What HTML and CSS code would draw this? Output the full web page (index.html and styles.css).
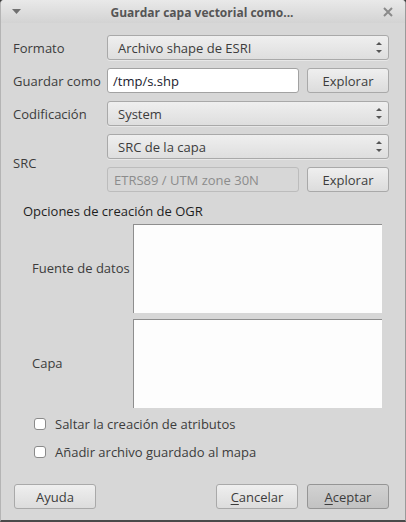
FILE: index.html
```html
<!DOCTYPE html>
<html lang="es">
<head>
<meta charset="utf-8">
<link rel="stylesheet" href="styles.css">
</head>
<body>
<div class="window">
  <div class="titlebar">
    <svg class="menu-arrow" width="9" height="5" viewBox="0 0 9 5"><path d="M0 0 H9 L4.5 5 Z" fill="#707070"/></svg>
    <span class="title">Guardar capa vectorial como...</span>
    <svg class="close" width="10" height="10" viewBox="0 0 10 10"><path d="M1 1 L9 9 M9 1 L1 9" stroke="#8a8a8a" stroke-width="2"/></svg>
  </div>
  <div class="content">
    <div class="form">
      <div class="label">Formato</div>
      <div class="combo"><span>Archivo shape de ESRI</span><span class="spin"><i class="up"></i><i class="down"></i></span></div>

      <div class="label">Guardar como</div>
      <div class="pair">
        <div class="input">/tmp/s.shp</div>
        <button class="btn">Explorar</button>
      </div>

      <div class="label">Codificación</div>
      <div class="combo"><span>System</span><span class="spin"><i class="up"></i><i class="down"></i></span></div>

      <div class="label src">SRC</div>
      <div class="combo"><span>SRC de la capa</span><span class="spin"><i class="up"></i><i class="down"></i></span></div>
      <div class="pair">
        <div class="input disabled">ETRS89 / UTM zone 30N</div>
        <button class="btn">Explorar</button>
      </div>
    </div>

    <div class="group">
      <div class="group-title">Opciones de creación de OGR</div>
      <div class="group-grid">
        <div class="glabel">Fuente de datos</div>
        <div class="textarea"></div>
        <div class="glabel">Capa</div>
        <div class="textarea"></div>
      </div>
    </div>

    <div class="checks">
      <label class="check"><span class="box"></span>Saltar la creación de atributos</label>
      <label class="check"><span class="box"></span>Añadir archivo guardado al mapa</label>
    </div>

    <div class="buttons">
      <button class="btn">Ayuda</button>
      <span class="spacer"></span>
      <button class="btn"><u>C</u>ancelar</button>
      <button class="btn default"><u>A</u>ceptar</button>
    </div>
  </div>
</div>
</body>
</html>
```

FILE: styles.css
```css
* { box-sizing: border-box; }
html, body {
  margin: 0;
  padding: 0;
  background: #3a3a3a;
}
body {
  font-family: "Open Sans", "DejaVu Sans", sans-serif;
  font-size: 13px;
  color: #3c3c3c;
}
.window {
  width: 406px;
  height: 522px;
  background: #d7d7d7;
  border-left: 1px solid #b4b4b4;
  border-right: 1px solid #9a9a9a;
  border-bottom: 2px solid #4a4a4a;
  border-radius: 4px 4px 0 0;
  display: flex;
  flex-direction: column;
  overflow: hidden;
}
.titlebar {
  height: 23px;
  flex: none;
  display: flex;
  align-items: center;
  padding: 0 12px 0 11px;
  background: linear-gradient(#e9e9e9, #d3d3d3);
}
.menu-arrow { flex: none; }
.title {
  flex: 1;
  text-align: center;
  font-weight: bold;
  font-size: 12px;
  color: #555555;
  padding-top: 1px;
}
.close { flex: none; }

.content {
  flex: 1;
  display: flex;
  flex-direction: column;
  padding: 12px 16px 0 12px;
}
.form {
  display: grid;
  grid-template-columns: 94px 282px;
  grid-auto-rows: 25px;
  row-gap: 8px;
}
.label {
  display: flex;
  align-items: center;
}
.label.src { grid-row: span 2; }
.combo {
  display: flex;
  align-items: center;
  justify-content: space-between;
  padding: 0 6px 0 10px;
  border: 1px solid #a9a9a9;
  border-radius: 3px;
  background: linear-gradient(#efefef, #dedede);
  box-shadow: 0 1px 0 rgba(255,255,255,0.4);
}
.spin {
  display: flex;
  flex-direction: column;
  gap: 5px;
  align-items: center;
}
.spin i {
  width: 0; height: 0;
  border-left: 3px solid transparent;
  border-right: 3px solid transparent;
}
.spin .up { border-bottom: 3px solid #555; }
.spin .down { border-top: 3px solid #555; }
.pair {
  display: flex;
  gap: 8px;
}
.input {
  flex: 1;
  display: flex;
  align-items: center;
  padding: 0 5px;
  background: #ffffff;
  border: 1px solid #a2a2a2;
  border-radius: 3px;
  color: #1a1a2e;
}
.input.disabled {
  background: #d7d7d7;
  border-color: #bcbcbc;
  color: #8c8c8c;
  padding-left: 6px;
}
.btn {
  width: 82px;
  height: 25px;
  flex: none;
  font: inherit;
  color: #3c3c3c;
  border: 1px solid #a9a9a9;
  border-radius: 3px;
  background: linear-gradient(#efefef, #dcdcdc);
  padding: 0;
}
.btn u { text-decoration-thickness: 1px; text-underline-offset: 2px; }
.btn.default {
  background: linear-gradient(#d2d2d2, #c2c2c2);
  border-color: #959595;
}

.group {
  padding: 10px 0 0 10px;
}
.group-title {
  color: #1e1e1e;
  line-height: 18px;
}
.group-grid {
  display: grid;
  grid-template-columns: 101px 249px;
  grid-template-rows: 89px 89px;
  row-gap: 6px;
  padding: 4px 0 0 9px;
}
.glabel {
  display: flex;
  align-items: center;
  padding-bottom: 1px;
}
.textarea {
  background: #fdfdfd;
  border-top: 1px solid #8e8e8e;
  border-left: 1px solid #8e8e8e;
}

.checks {
  display: flex;
  flex-direction: column;
  gap: 10px;
  padding: 7px 0 0 21px;
}
.check {
  display: flex;
  align-items: center;
  gap: 9px;
  height: 18px;
}
.box {
  width: 12px;
  height: 12px;
  border: 1px solid #8a8a8a;
  border-radius: 3px;
  background: #ffffff;
}

.buttons {
  display: flex;
  gap: 9px;
  margin-top: 23px;
  padding-left: 1px;
}
.spacer { flex: 1; }
```
